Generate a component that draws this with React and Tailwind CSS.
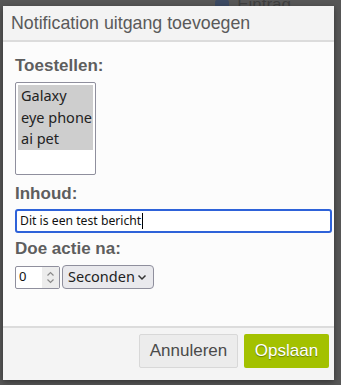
import React from "react";

export default function App() {
  return (
    <div className="relative h-[385px] w-[341px] overflow-hidden bg-[#575757] font-['Liberation_Sans',Arial,sans-serif]">
      {/* faded page behind the overlay */}
      <div className="absolute right-[50px] top-[-8px] flex items-center gap-2 text-[17px] text-[#3f3f3f]">
        <span className="inline-block h-[12px] w-[14px] rounded-sm bg-[#3c4a63]"></span>
        <span>Eintrag</span>
      </div>

      <div className="relative ml-[3px] mt-[6px] flex h-[374px] w-[331px] flex-col bg-[#fcfcfc] shadow-[0_2px_6px_rgba(0,0,0,0.4)]">
        <div className="flex h-[36px] items-center border-b-2 border-[#dcdcdc] bg-[#f3f3f3] pl-[8px]">
          <h1 className="text-[17.8px] text-[#5a5a5a]">Notification uitgang toevoegen</h1>
        </div>

        <div className="flex flex-1 flex-col px-[12px] pt-[14px]">
          <label className="text-[17px] font-bold leading-[20px] text-[#5e5e5e]">Toestellen:</label>
          <div className="mt-[6px] h-[93px] w-[81px] rounded-[2px] border border-[#8f8f9d] bg-white p-[2px] font-['Noto_Sans',sans-serif] text-[14.5px] leading-[21.5px] text-[#222]">
            <div className="bg-[#cecece] pl-[3px]">Galaxy</div>
            <div className="bg-[#cecece] pl-[3px]">eye phone</div>
            <div className="bg-[#cecece] pl-[3px]">ai pet</div>
          </div>

          <label className="mt-[9px] text-[17px] font-bold leading-[20px] text-[#5e5e5e]">Inhoud:</label>
          <div className="mt-[5px] flex h-[24px] w-[317px] items-center rounded-[3px] border-2 border-[#2e62d9] bg-white pl-[3px] font-['Noto_Sans',sans-serif] text-[12.2px] text-[#111]">
            Dit is een test bericht<span className="ml-px inline-block h-[16px] w-px bg-black"></span>
          </div>

          <label className="mt-[6px] text-[17px] font-bold leading-[20px] text-[#5e5e5e]">Doe actie na:</label>
          <div className="mt-[6px] flex items-center gap-[2px]">
            <div className="flex h-[23px] w-[45px] items-center justify-between rounded-[2px] border border-[#8f8f9d] bg-white pl-[3px] font-['Noto_Sans',sans-serif] text-[13px] text-[#111]">
              <span>0</span>
              <span className="flex h-full w-[17px] flex-col items-center justify-center bg-[#ececec]">
                <svg width="9" height="15" viewBox="0 0 9 15" fill="none" stroke="#8a8a8a" strokeWidth="1.2">
                  <path d="M1.5 5.5 L4.5 2.5 L7.5 5.5" />
                  <path d="M1.5 9.5 L4.5 12.5 L7.5 9.5" />
                </svg>
              </span>
            </div>
            <div className="flex h-[24px] w-[92px] items-center justify-between rounded-[4px] border border-[#8f8f9d] bg-[#e9e9ed] pl-[5px] pr-[6px] font-['Noto_Sans',sans-serif] text-[14.5px] text-[#222]">
              <span>Seconden</span>
              <svg width="10" height="8" viewBox="0 0 10 8" fill="none" stroke="#333" strokeWidth="1.5">
                <path d="M1.5 2.5 L5 6 L8.5 2.5" />
              </svg>
            </div>
          </div>
        </div>

        <div className="flex h-[54px] items-start justify-end gap-[6px] border-t-2 border-[#dcdcdc] bg-[#f4f4f4] pr-[5px] pt-[6px]">
          <button className="h-[34px] w-[99px] rounded-[2px] border border-[#d8d8d8] bg-[#ececec] text-[17px] text-[#4a4a4a]">Annuleren</button>
          <button className="h-[34px] w-[85px] rounded-[2px] bg-[#a3c100] text-[17px] text-white [text-shadow:0_1px_1px_rgba(0,0,0,0.35)]">Opslaan</button>
        </div>
      </div>
    </div>
  );
}
